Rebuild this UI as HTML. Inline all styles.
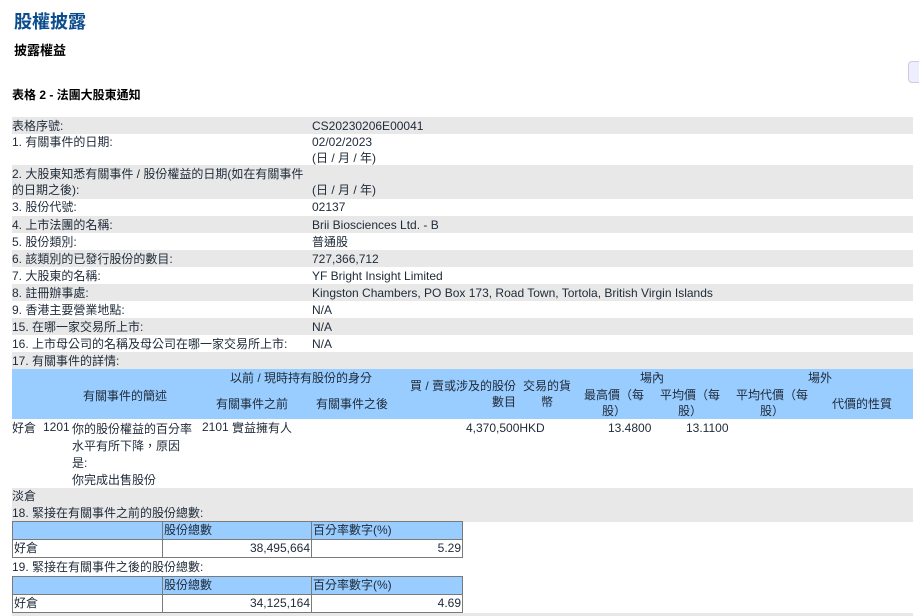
<!DOCTYPE html>
<html><head><meta charset="utf-8"><style>
*{margin:0;padding:0;box-sizing:border-box}
body{width:919px;height:616px;background:#fff;font-family:"Liberation Sans","Noto Sans CJK TC",sans-serif;font-size:12px;color:#1e2a38;position:relative;overflow:hidden}
.a{position:absolute;white-space:nowrap;line-height:16px}
.g{position:absolute;left:12px;width:901px;background:#e8e8e8}
.b{position:absolute;background:#99ccff}
.c{text-align:center}
.r{text-align:right}
td{border:1px solid #7a7a7a;font-size:12px;line-height:17px;padding:0 1px}
table{border-collapse:collapse;position:absolute;left:12px}
</style></head><body>
<div class="a" style="left:14px;top:10px;font-size:18px;line-height:24px;font-weight:bold;color:#0b4c8c">股權披露</div>
<div class="a" style="left:14px;top:43px;font-size:13px;font-weight:bold;color:#000">披露權益</div>
<div class="a" style="left:12px;top:87px;font-size:12px;font-weight:bold;color:#000">表格 2 - 法團大股東通知</div>
<div style="position:absolute;left:908px;top:61px;width:14px;height:22px;border:1px solid #ccd;border-radius:4px;background:#eef"></div>

<div class="g" style="top:117px;height:17px"></div>
<div class="g" style="top:165px;height:34px"></div>
<div class="g" style="top:216px;height:17px"></div>
<div class="g" style="top:250px;height:17px"></div>
<div class="g" style="top:284px;height:17px"></div>
<div class="g" style="top:318px;height:17px"></div>
<div class="g" style="top:352px;height:17px"></div>

<div class="a" style="left:12px;top:118px">表格序號:</div><div class="a" style="left:312px;top:118px">CS20230206E00041</div>
<div class="a" style="left:12px;top:134px">1. 有關事件的日期:</div><div class="a" style="left:312px;top:134px">02/02/2023<br>(日 / 月 / 年)</div>
<div class="a" style="left:12px;top:166px">2. 大股東知悉有關事件 / 股份權益的日期(如在有關事件<br>的日期之後):</div><div class="a" style="left:312px;top:182px">(日 / 月 / 年)</div>
<div class="a" style="left:12px;top:199px">3. 股份代號:</div><div class="a" style="left:312px;top:199px">02137</div>
<div class="a" style="left:12px;top:217px">4. 上市法團的名稱:</div><div class="a" style="left:312px;top:217px">Brii Biosciences Ltd. - B</div>
<div class="a" style="left:12px;top:234px">5. 股份類別:</div><div class="a" style="left:312px;top:234px">普通股</div>
<div class="a" style="left:12px;top:251px">6. 該類別的已發行股份的數目:</div><div class="a" style="left:312px;top:251px">727,366,712</div>
<div class="a" style="left:12px;top:268px">7. 大股東的名稱:</div><div class="a" style="left:312px;top:268px">YF Bright Insight Limited</div>
<div class="a" style="left:12px;top:285px">8. 註冊辦事處:</div><div class="a" style="left:312px;top:285px">Kingston Chambers, PO Box 173, Road Town, Tortola, British Virgin Islands</div>
<div class="a" style="left:12px;top:302px">9. 香港主要營業地點:</div><div class="a" style="left:312px;top:302px">N/A</div>
<div class="a" style="left:12px;top:319px">15. 在哪一家交易所上市:</div><div class="a" style="left:312px;top:319px">N/A</div>
<div class="a" style="left:12px;top:336px">16. 上市母公司的名稱及母公司在哪一家交易所上市:</div><div class="a" style="left:312px;top:336px">N/A</div>
<div class="a" style="left:12px;top:353px">17. 有關事件的詳情:</div>

<div class="b" style="left:12px;top:369px;width:901px;height:50px"></div>
<div class="a c" style="left:40px;width:170px;top:388px">有關事件的簡述</div>
<div class="a" style="left:230px;top:370px">以前 / 現時持有股份的身分</div>
<div class="a" style="left:216px;top:396px">有關事件之前</div>
<div class="a" style="left:316px;top:396px">有關事件之後</div>
<div class="a r" style="left:400px;width:116px;top:378px">買 / 賣或涉及的股份<br>數目</div>
<div class="a c" style="left:520px;width:54px;top:378px">交易的貨<br>幣</div>
<div class="a" style="left:640px;top:370px">場內</div>
<div class="a" style="left:808px;top:370px">場外</div>
<div class="a c" style="left:580px;width:68px;top:387px">最高價（每<br>股）</div>
<div class="a c" style="left:656px;width:68px;top:387px">平均價（每<br>股）</div>
<div class="a c" style="left:732px;width:80px;top:387px">平均代價（每<br>股）</div>
<div class="a" style="left:832px;top:396px">代價的性質</div>

<div class="a" style="left:12px;top:420px">好倉</div>
<div class="a" style="left:43px;top:419px">1201</div>
<div class="a" style="left:72px;top:421px;line-height:17px">你的股份權益的百分率<br>水平有所下降，原因<br>是:<br>你完成出售股份</div>
<div class="a" style="left:202px;top:419px">2101</div>
<div class="a" style="left:232px;top:420px">實益擁有人</div>
<div class="a" style="left:466px;top:420px">4,370,500HKD</div>
<div class="a" style="left:608px;top:420px">13.4800</div>
<div class="a" style="left:686px;top:420px">13.1100</div>

<div class="g" style="top:488px;height:34px"></div>
<div class="a" style="left:12px;top:488px">淡倉</div>
<div class="a" style="left:12px;top:505px">18. 緊接在有關事件之前的股份總數:</div>
<table style="top:521px;width:451px">
<tr style="background:#99ccff"><td style="width:150px"></td><td style="width:149px">股份總數</td><td>百分率數字(%)</td></tr>
<tr><td>好倉</td><td class="r">38,495,664</td><td class="r">5.29</td></tr></table>
<div class="a" style="left:12px;top:559px">19. 緊接在有關事件之後的股份總數:</div>
<table style="top:576px;width:451px">
<tr style="background:#99ccff"><td style="width:150px"></td><td style="width:149px">股份總數</td><td>百分率數字(%)</td></tr>
<tr><td>好倉</td><td class="r">34,125,164</td><td class="r">4.69</td></tr></table>
<div class="g" style="top:613px;height:3px"></div>
</body></html>
